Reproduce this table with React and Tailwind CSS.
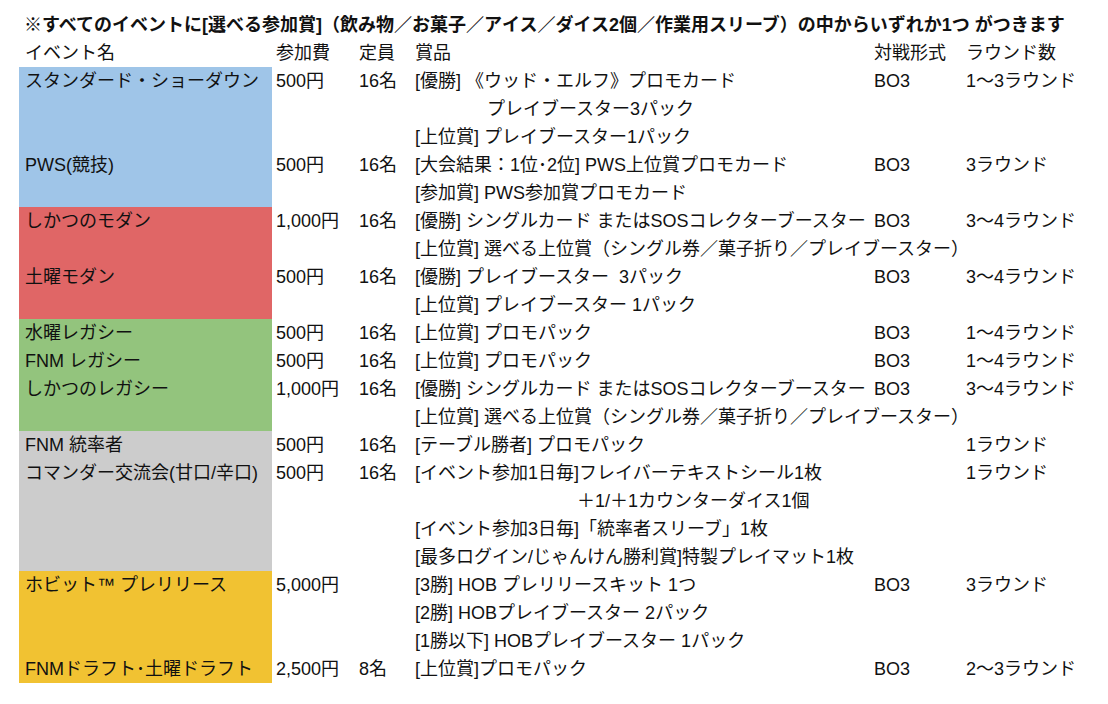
const BLUE = "bg-[#9fc5e8]";
const RED = "bg-[#e06666]";
const GREEN = "bg-[#93c47d]";
const GRAY = "bg-[#cccccc]";
const YELLOW = "bg-[#f1c232]";

// one entry per sheet row: [color, name, fee, cap, prize, format, rounds, indent]
const rows = [
  [BLUE, "スタンダード・ショーダウン", "500円", "16名", "[優勝] 《ウッド・エルフ》プロモカード", "BO3", "1〜3ラウンド"],
  [BLUE, "", "", "", "プレイブースター3パック", "", "", "pl-[77px]"],
  [BLUE, "", "", "", "[上位賞] プレイブースター1パック", "", ""],
  [BLUE, "PWS(競技)", "500円", "16名", "[大会結果：1位･2位] PWS上位賞プロモカード", "BO3", "3ラウンド"],
  [BLUE, "", "", "", "[参加賞] PWS参加賞プロモカード", "", ""],
  [RED, "しかつのモダン", "1,000円", "16名", "[優勝] シングルカード またはSOSコレクターブースター", "BO3", "3〜4ラウンド"],
  [RED, "", "", "", "[上位賞] 選べる上位賞（シングル券／菓子折り／プレイブースター）", "", ""],
  [RED, "土曜モダン", "500円", "16名", "[優勝] プレイブースター\u00a0 3パック", "BO3", "3〜4ラウンド"],
  [RED, "", "", "", "[上位賞] プレイブースター 1パック", "", ""],
  [GREEN, "水曜レガシー", "500円", "16名", "[上位賞] プロモパック", "BO3", "1〜4ラウンド"],
  [GREEN, "FNM レガシー", "500円", "16名", "[上位賞] プロモパック", "BO3", "1〜4ラウンド"],
  [GREEN, "しかつのレガシー", "1,000円", "16名", "[優勝] シングルカード またはSOSコレクターブースター", "BO3", "3〜4ラウンド"],
  [GREEN, "", "", "", "[上位賞] 選べる上位賞（シングル券／菓子折り／プレイブースター）", "", ""],
  [GRAY, "FNM 統率者", "500円", "16名", "[テーブル勝者] プロモパック", "", "1ラウンド"],
  [GRAY, "コマンダー交流会(甘口/辛口)", "500円", "16名", "[イベント参加1日毎]フレイバーテキストシール1枚", "", "1ラウンド"],
  [GRAY, "", "", "", "＋1/＋1カウンターダイス1個", "", "", "pl-[167px]"],
  [GRAY, "", "", "", "[イベント参加3日毎]「統率者スリーブ」1枚", "", ""],
  [GRAY, "", "", "", "[最多ログイン/じゃんけん勝利賞]特製プレイマット1枚", "", ""],
  [YELLOW, "ホビット™ プレリリース", "5,000円", "", "[3勝] HOB プレリリースキット 1つ", "BO3", "3ラウンド"],
  [YELLOW, "", "", "", "[2勝] HOBプレイブースター 2パック", "", ""],
  [YELLOW, "", "", "", "[1勝以下] HOBプレイブースター 1パック", "", ""],
  [YELLOW, "FNMドラフト･土曜ドラフト", "2,500円", "8名", "[上位賞]プロモパック", "BO3", "2〜3ラウンド"],
];

function Row({ color, name, fee, cap, prize, format, rounds, indent }) {
  return (
    <div className="flex h-[28px] items-center whitespace-nowrap">
      <div className={`flex h-full w-[253px] shrink-0 items-center pl-[6px] ${color}`}>{name}</div>
      <div className="w-[81px] shrink-0 pl-[4px]">{fee}</div>
      <div className="w-[57px] shrink-0 pl-[6px]">{cap}</div>
      <div className={`w-[459px] shrink-0 ${indent || "pl-[5px]"}`}>{prize}</div>
      <div className="w-[92px] shrink-0 pl-[5px]">{format}</div>
      <div className="shrink-0 pl-[5px]">{rounds}</div>
    </div>
  );
}

export default function App() {
  return (
    <div
      className="h-[704px] w-[1108px] overflow-hidden bg-white pl-[19px] pt-[10px] text-[18px] leading-none text-[#111]"
      style={{ fontFamily: '"Liberation Sans", "Noto Sans CJK JP", sans-serif' }}
    >
      <div className="flex h-[29px] items-center whitespace-nowrap pl-[5px] font-bold">
        ※すべてのイベントに[選べる参加賞]（飲み物／お菓子／アイス／ダイス2個／作業用スリーブ）の中からいずれか1つ がつきます
      </div>
      <div className="flex h-[28px] items-center whitespace-nowrap">
        <div className="w-[253px] shrink-0 pl-[6px]">イベント名</div>
        <div className="w-[81px] shrink-0 pl-[4px]">参加費</div>
        <div className="w-[57px] shrink-0 pl-[6px]">定員</div>
        <div className="w-[459px] shrink-0 pl-[5px]">賞品</div>
        <div className="w-[92px] shrink-0 pl-[5px]">対戦形式</div>
        <div className="shrink-0 pl-[5px]">ラウンド数</div>
      </div>
      {rows.map((r, i) => (
        <Row
          key={i}
          color={r[0]}
          name={r[1]}
          fee={r[2]}
          cap={r[3]}
          prize={r[4]}
          format={r[5]}
          rounds={r[6]}
          indent={r[7]}
        />
      ))}
    </div>
  );
}
